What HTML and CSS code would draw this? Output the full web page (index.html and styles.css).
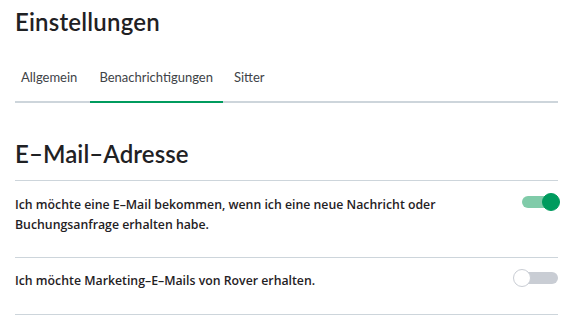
FILE: index.html
```html
<!DOCTYPE html>
<html lang="de">
<head>
  <meta charset="UTF-8" />
  <meta name="viewport" content="width=device-width, initial-scale=1.0"/>
  <title>Einstellungen</title>
  <link rel="stylesheet" href="styles.css">
</head>
<body>

<div class="settings">
  <h1>Einstellungen</h1>

  <div class="tabs">
    <div class="tab first">Allgemein</div>
    <div class="tab active">Benachrichtigungen</div>
    <div class="tab last">Sitter</div>
  </div>

  <h2>E–Mail–Adresse</h2>

  <div class="row">
    <div class="label">Ich möchte eine E–Mail bekommen, wenn ich eine neue Nachricht oder Buchungsanfrage erhalten habe.</div>
    <div class="switch on"><span class="track"></span><span class="knob"></span></div>
  </div>

  <div class="row">
    <div class="label">Ich möchte Marketing–E–Mails von Rover erhalten.</div>
    <div class="switch"><span class="track"></span><span class="knob"></span></div>
  </div>
</div>

</body>
</html>
```

FILE: styles.css
```css
body {
  margin: 0;
  font-family: Lato, "Noto Sans", sans-serif;
  color: #1f2124;
  background: white;
}

.settings {
  padding: 0 15px;
}

h1 {
  margin: 0;
  padding-top: 7px;
  font-size: 24px;
  line-height: 30px;
  font-weight: 600;
  letter-spacing: 0.2px;
}

.tabs {
  display: flex;
  margin-top: 30px;
  border-bottom: 2px solid #cdd5db;
}

.tab {
  padding: 0 10px 14px 9px;
  font-size: 13px;
  line-height: 20px;
  color: #404347;
  margin-bottom: -2px;
  border-bottom: 2px solid transparent;
}

.tab.first {
  padding-left: 6px;
  padding-right: 13px;
}

.tab.last {
  padding-left: 11px;
}

.tab.active {
  border-bottom-color: #009b5e;
}

h2 {
  margin: 0;
  padding: 37px 0 12px;
  font-size: 24px;
  line-height: 28px;
  font-weight: 600;
  letter-spacing: 0.1px;
  border-bottom: 1px solid #cdd5db;
}

.row {
  display: flex;
  align-items: flex-start;
  justify-content: space-between;
  padding: 14px 0 22px;
  border-bottom: 1px solid #cdd5db;
}

.row + .row {
  padding-top: 13px;
  padding-bottom: 23px;
}

.label {
  width: 440px;
  font-family: "Open Sans", Lato, sans-serif;
  font-size: 12.3px;
  line-height: 20px;
  font-weight: 600;
}

.switch {
  position: relative;
  width: 47px;
  height: 18px;
  margin-top: -2px;
  margin-right: -2px;
}

.track {
  position: absolute;
  left: 9px;
  right: 2px;
  top: 3px;
  height: 12px;
  border-radius: 6px;
  background: #c9cdd4;
}

.knob {
  position: absolute;
  left: 0;
  top: 0;
  width: 16px;
  height: 16px;
  border-radius: 50%;
  background: white;
  border: 1px solid #c9cdd4;
}

.switch.on .track {
  background: #80cba9;
}

.switch.on .knob {
  left: auto;
  right: 0;
  background: #009b5e;
  border-color: #009b5e;
}
```
